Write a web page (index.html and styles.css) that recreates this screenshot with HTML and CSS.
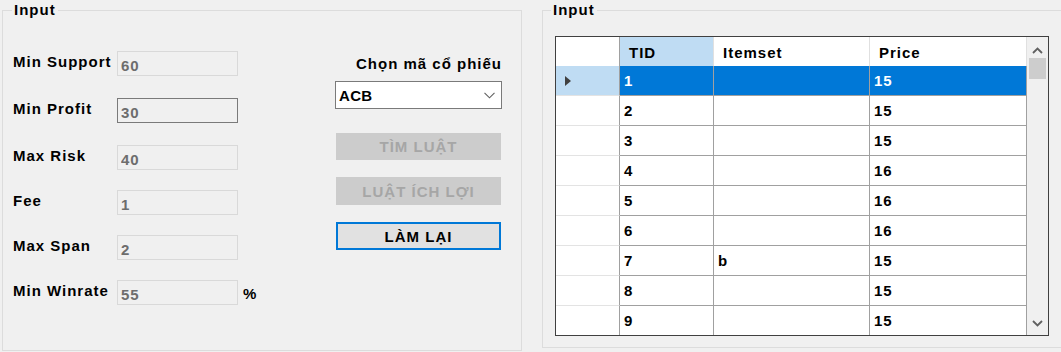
FILE: index.html
```html
<!DOCTYPE html>
<html>
<head>
<title>Input</title>
<link rel="stylesheet" href="styles.css">
</head>
<body>
<div class="window">

  <fieldset class="group group-params">
    <legend>Input</legend>
    <div class="params">
      <div class="fields">
        <div class="row row-wide"><label for="sup">Min Support</label><input id="sup" class="box" readonly value="60"></div>
        <div class="row row-wide"><label for="pro">Min Profit</label><input id="pro" class="box box-hot" readonly value="30"></div>
        <div class="row"><label for="risk">Max Risk</label><input id="risk" class="box" readonly value="40"></div>
        <div class="row"><label for="fee">Fee</label><input id="fee" class="box" readonly value="1"></div>
        <div class="row"><label for="span">Max Span</label><input id="span" class="box" readonly value="2"></div>
        <div class="row"><label for="win">Min Winrate</label><input id="win" class="box" readonly value="55"><span class="unit">%</span></div>
      </div>

      <div class="actions">
        <div class="pick-title">Chọn mã cổ phiếu</div>
        <div class="combo">
          <span>ACB</span>
          <svg width="11" height="7" viewBox="0 0 11 7"><path d="M0.5 0.8 L5.5 5.8 L10.5 0.8" fill="none" stroke="#606060" stroke-width="1.1"/></svg>
        </div>
        <button class="btn btn-first" disabled>TÌM LUẬT</button>
        <button class="btn" disabled>LUẬT ÍCH LỢI</button>
        <button class="btn btn-focus">LÀM LẠI</button>
      </div>
    </div>
  </fieldset>

  <fieldset class="group group-data">
    <legend>Input</legend>
    <div class="grid">
      <div class="grid-body">
        <div class="grid-row grid-head">
          <div class="cell rowhead"></div>
          <div class="cell head-sel">TID</div>
          <div class="cell">Itemset</div>
          <div class="cell">Price</div>
        </div>
        <div class="grid-row row-sel">
          <div class="cell rowhead"><svg width="6" height="10" viewBox="0 0 6 10"><path d="M0 0 L6 5 L0 10 Z" fill="#404040"/></svg></div>
          <div class="cell">1</div><div class="cell"></div><div class="cell">15</div>
        </div>
        <div class="grid-row"><div class="cell rowhead"></div><div class="cell">2</div><div class="cell"></div><div class="cell">15</div></div>
        <div class="grid-row"><div class="cell rowhead"></div><div class="cell">3</div><div class="cell"></div><div class="cell">15</div></div>
        <div class="grid-row"><div class="cell rowhead"></div><div class="cell">4</div><div class="cell"></div><div class="cell">16</div></div>
        <div class="grid-row"><div class="cell rowhead"></div><div class="cell">5</div><div class="cell"></div><div class="cell">16</div></div>
        <div class="grid-row"><div class="cell rowhead"></div><div class="cell">6</div><div class="cell"></div><div class="cell">16</div></div>
        <div class="grid-row"><div class="cell rowhead"></div><div class="cell">7</div><div class="cell">b</div><div class="cell">15</div></div>
        <div class="grid-row"><div class="cell rowhead"></div><div class="cell">8</div><div class="cell"></div><div class="cell">15</div></div>
        <div class="grid-row"><div class="cell rowhead"></div><div class="cell">9</div><div class="cell"></div><div class="cell">15</div></div>
      </div>
      <div class="scrollbar">
        <svg class="arrow" width="11" height="7" viewBox="0 0 11 7"><path d="M1 6 L5.5 1.5 L10 6" fill="none" stroke="#606060" stroke-width="1.8"/></svg>
        <div class="thumb"></div>
        <div class="track"></div>
        <svg class="arrow" width="11" height="7" viewBox="0 0 11 7"><path d="M1 1 L5.5 5.5 L10 1" fill="none" stroke="#606060" stroke-width="1.8"/></svg>
      </div>
    </div>
  </fieldset>

</div>
</body>
</html>
```

FILE: styles.css
```css
body{
  margin: 0;
  background-color: #f0f0f0;
  font-family: "Liberation Sans", Arial, sans-serif;
  font-size: 15px;
  font-weight: bold;
  letter-spacing: 1px;
  color: #000;
  overflow: hidden;
}
.window{
  display: flex;
  gap: 20px;
  padding-left: 2px;
  width: 1100px;
}
.group{
  margin: 0;
  padding: 0;
  border: 1px solid #dcdcdc;
  min-width: 0;
}
.group legend{
  margin-left: 9px;
  padding: 0 2px;
  line-height: 20px;
}
.group-params{
  width: 520px;
  height: 351px;
  box-sizing: border-box;
}
.group-data{
  width: 540px;
  height: 348px;
  box-sizing: border-box;
}
.group-data legend{
  margin-left: 8px;
}

/* parameters */
.params{
  display: flex;
  justify-content: space-between;
  padding: 31px 19px 0 10px;
}
.fields{
  display: flex;
  flex-direction: column;
  gap: 20px;
}
.row{
  display: flex;
  align-items: flex-start;
  height: 25px;
}
.row-wide{
  margin-bottom: 2px;
}
.row label{
  width: 104px;
  padding-top: 2px;
  line-height: 17px;
  white-space: nowrap;
}
.box{
  box-sizing: border-box;
  width: 121px;
  height: 25px;
  margin: 0;
  padding: 3px 3px 0 3px;
  border: 1px solid #d9d9d9;
  background-color: #f0f0f0;
  color: #6d6d6d;
  font: inherit;
  letter-spacing: inherit;
  line-height: 17px;
  outline: none;
}
.box-hot{
  border-color: #7a7a7a;
}
.unit{
  margin-left: 5px;
  padding-top: 5px;
  line-height: 17px;
}

.actions{
  display: flex;
  flex-direction: column;
  width: 167px;
  padding-top: 4px;
}
.pick-title{
  text-align: right;
  line-height: 17px;
  white-space: nowrap;
}
.combo{
  box-sizing: border-box;
  display: flex;
  align-items: center;
  justify-content: space-between;
  height: 28px;
  margin-top: 9px;
  padding: 1px 6px 0 3px;
  border: 1px solid #7a7a7a;
  background-color: #fff;
}
.combo span{
  letter-spacing: 0.3px;
}
.btn{
  box-sizing: border-box;
  width: 165px;
  height: 28px;
  margin: 17px 0 0 1px;
  padding: 0;
  border: 1px solid #cccccc;
  background-color: #cccccc;
  color: #a6a6a6;
  font: inherit;
  letter-spacing: 1px;
}
.btn-first{
  margin-top: 24px;
  height: 27px;
}
.btn-focus{
  border: 2px solid #0078d7;
  background-color: #e1e1e1;
  color: #000;
}

/* data grid */
.group-data .grid{
  margin: 16px 0 0 12px;
}
.grid{
  display: flex;
  width: 494px;
  height: 300px;
  box-sizing: border-box;
  border: 1px solid #404040;
  background-color: #fff;
  overflow: hidden;
}
.grid-body{
  width: 471px;
}
.grid-row{
  display: grid;
  grid-template-columns: 64px 94px 156px 157px;
  height: 30px;
}
.cell{
  box-sizing: border-box;
  display: flex;
  align-items: center;
  padding: 0 0 0 4px;
  border-right: 1px solid #a0a0a0;
  border-bottom: 1px solid #a0a0a0;
  white-space: nowrap;
}
.rowhead{
  border-bottom-color: #e3e3e3;
  padding-left: 9px;
}
.grid-head{
  height: 29px;
}
.grid-head .cell{
  border-bottom: none;
  border-right-color: #e0e0e0;
  padding: 2px 0 0 9px;
}
.grid-head .rowhead{
  border-right-color: #a0a0a0;
}
.head-sel{
  background-color: #bfdcf3;
}
.row-sel .cell{
  background-color: #0078d7;
  color: #fff;
}
.row-sel .rowhead{
  background-color: #bfdcf3;
}

.scrollbar{
  display: flex;
  flex-direction: column;
  align-items: center;
  width: 21px;
  background-color: #f0f0f0;
}
.scrollbar .arrow{
  margin: 10px 0 4px 0;
}
.scrollbar .thumb{
  width: 17px;
  height: 21px;
  background-color: #cdcdcd;
}
.scrollbar .track{
  flex: 1;
}
.scrollbar .arrow:last-child{
  margin: 0 0 8px 0;
}
```
